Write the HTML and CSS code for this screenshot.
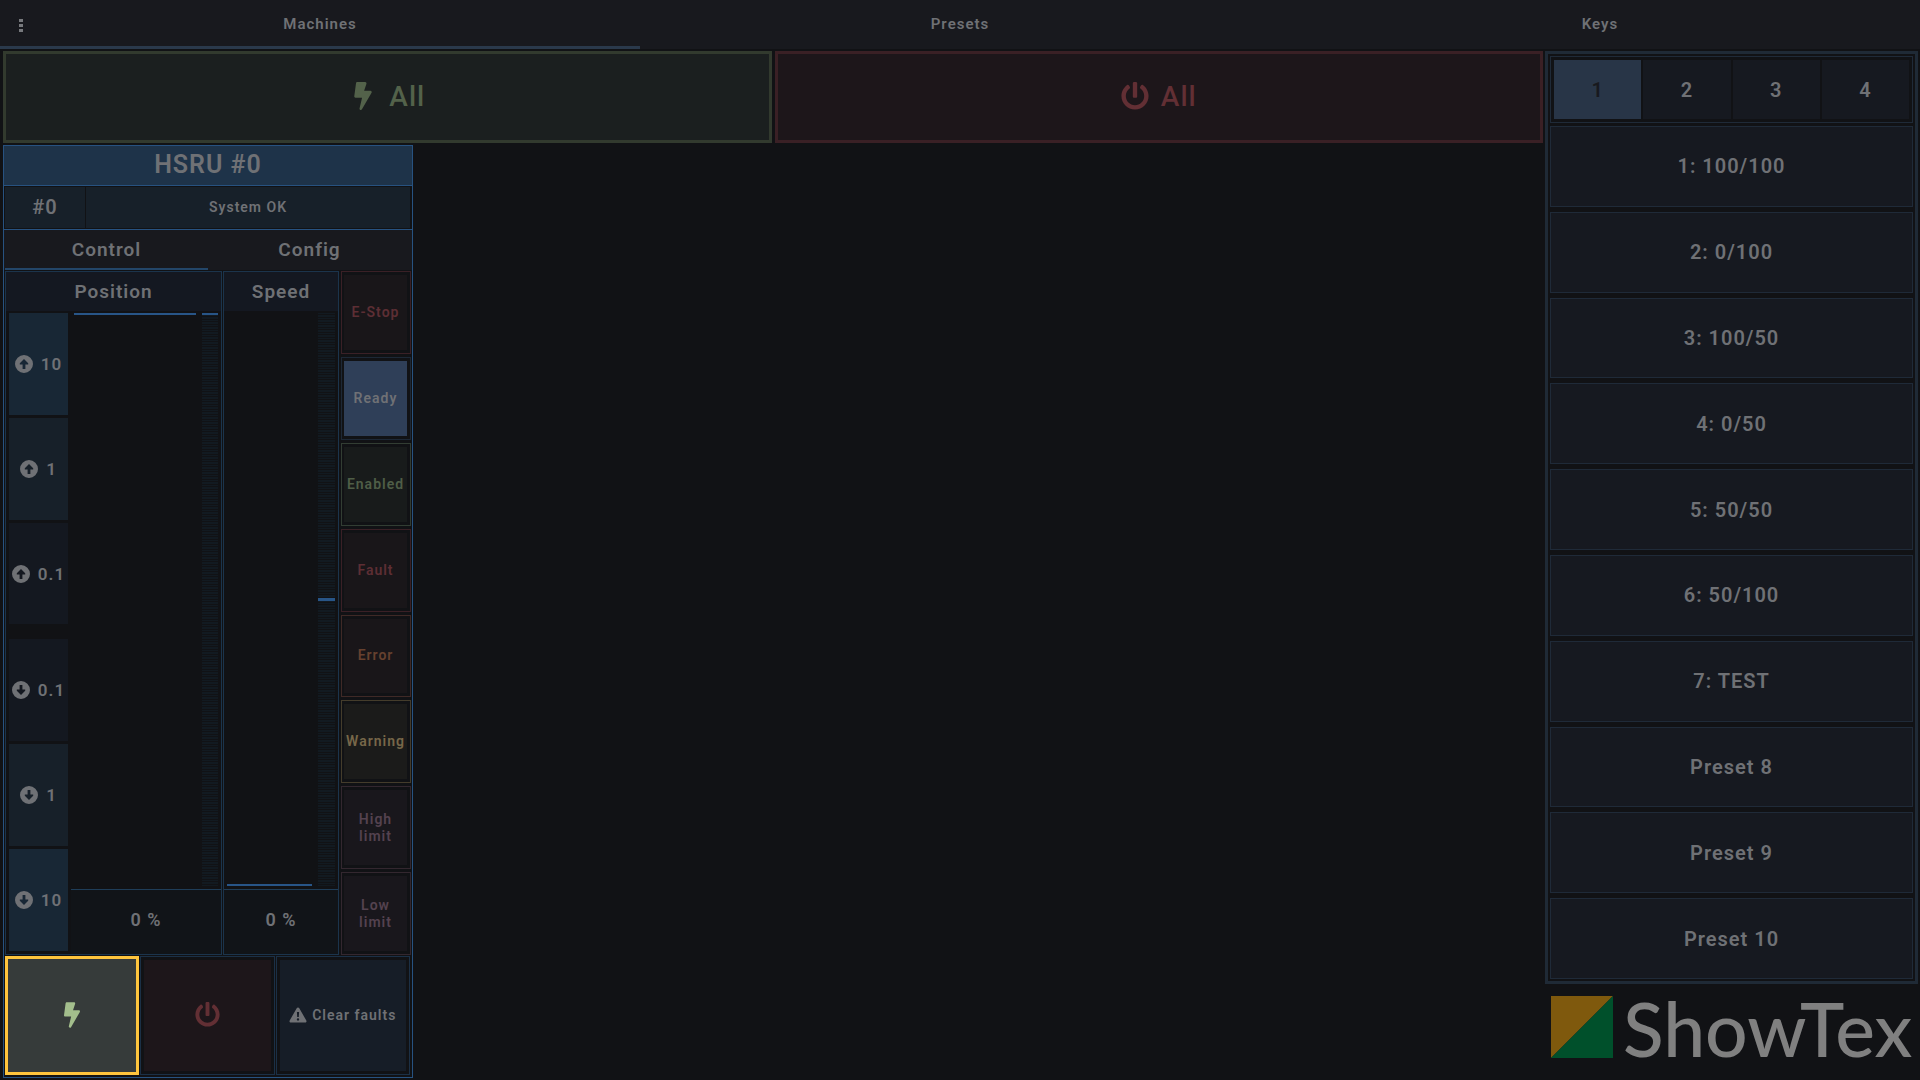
FILE: index.html
```
<!DOCTYPE html>
<html lang="en">
<head>
  <meta charset="UTF-8" />
  <meta name="viewport" content="width=device-width, initial-scale=1.0"/>
  <title>ShowTex Control</title>
  <link rel="stylesheet" href="styles.css">
</head>
<body>
  <!-- shared icons -->
  <svg class="sprite" aria-hidden="true">
    <symbol id="bolt" viewBox="0 0 320 512">
      <path d="M296 160H180.600l42.600-129.800C227.200 15 215.700 0 200 0H56C44 0 33.800 8.900 32.200 20.800l-32 240C-1.700 275.200 9.500 288 24 288h118.700L96.600 482.500c-3.600 15.200 8 29.500 23.300 29.500 8.400 0 16.400-4.400 20.800-12l176-304c9.300-15.900-2.200-36-20.700-36z"/>
    </symbol>
    <symbol id="power" viewBox="0 0 512 512">
      <path d="M400 54.100c63 45 104 118.600 104 201.900 0 136.800-110.800 247.700-247.500 248C120 504.300 8.200 393 8 256.400 7.900 173.100 48.900 99.300 111.800 54.200c11.700-8.300 28-4.800 35 7.700L162.600 90c5.900 10.500 3.100 23.800-6.600 31-41.500 30.800-68 79.600-68 134.900-.1 92.300 74.500 168.100 168 168.100 91.600 0 168.600-74.200 168-169.100-.3-51.800-24.700-101.800-68.100-134-9.700-7.200-12.400-20.500-6.500-30.900l15.800-28.100c7-12.400 23.200-16.100 34.800-7.800zM296 264V24c0-13.300-10.700-24-24-24h-32c-13.300 0-24 10.700-24 24v240c0 13.300 10.700 24 24 24h32c13.300 0 24-10.700 24-24z"/>
    </symbol>
    <symbol id="up" viewBox="0 0 18 18">
      <path fill-rule="evenodd" d="M9 0a9 9 0 1 1 0 18A9 9 0 0 1 9 0zM9 4L4.800 8.200V9.600H7.600V14H10.400V9.600H13.200V8.200z"/>
    </symbol>
    <symbol id="down" viewBox="0 0 18 18">
      <path fill-rule="evenodd" d="M9 0a9 9 0 1 1 0 18A9 9 0 0 1 9 0zM9 14L4.800 9.800V8.400H7.600V4H10.400V8.400H13.200V9.800z"/>
    </symbol>
    <symbol id="warn" viewBox="0 0 18 16">
      <path fill-rule="evenodd" d="M9 0.500c.6 0 1 .3 1.300.8l7 12.200c.6 1-.1 2-1.200 2H1.900c-1.100 0-1.800-1-1.200-2l7-12.200c.3-.5.700-.8 1.300-.8zM7.900 5l.3 5h1.600l.3-5zM9 11.200a1.200 1.200 0 1 0 0 2.400a1.200 1.200 0 0 0 0-2.400z"/>
    </symbol>
  </svg>

  <header>
    <button class="menu-button" aria-label="Menu"><span></span><span></span><span></span></button>
    <nav class="main-tabs">
      <button class="tab-button active">Machines</button>
      <button class="tab-button">Presets</button>
      <button class="tab-button">Keys</button>
    </nav>
  </header>

  <main>
    <section class="machines">
      <div class="all-row">
        <button class="all-button enable"><svg><use href="#bolt"/></svg>All</button>
        <button class="all-button disable"><svg><use href="#power"/></svg>All</button>
      </div>

      <article class="machine">
        <h2>HSRU #0</h2>
        <div class="machine-info">
          <div class="machine-id">#0</div>
          <div class="machine-state">System OK</div>
        </div>
        <div class="machine-tabs">
          <button class="active">Control</button>
          <button>Config</button>
        </div>

        <div class="control">
          <section class="axis position">
            <h3>Position</h3>
            <div class="axis-body">
              <div class="jog">
                <button class="step-10"><svg><use href="#up"/></svg>10</button>
                <button class="step-1"><svg><use href="#up"/></svg>1</button>
                <button class="step-01"><svg><use href="#up"/></svg>0.1</button>
                <button class="step-01 first-down"><svg><use href="#down"/></svg>0.1</button>
                <button class="step-1"><svg><use href="#down"/></svg>1</button>
                <button class="step-10"><svg><use href="#down"/></svg>10</button>
              </div>
              <div class="gauge">
                <div class="tracks">
                  <div class="slider at-top"></div>
                  <div class="meter at-top"></div>
                </div>
                <div class="readout">0 %</div>
              </div>
            </div>
          </section>

          <section class="axis speed">
            <h3>Speed</h3>
            <div class="axis-body">
              <div class="gauge">
                <div class="tracks">
                  <div class="slider at-bottom"></div>
                  <div class="meter at-middle"></div>
                </div>
                <div class="readout">0 %</div>
              </div>
            </div>
          </section>

          <div class="status">
            <div class="lamp red"><span>E-Stop</span></div>
            <div class="lamp ready"><span>Ready</span></div>
            <div class="lamp green"><span>Enabled</span></div>
            <div class="lamp red"><span>Fault</span></div>
            <div class="lamp orange"><span>Error</span></div>
            <div class="lamp yellow"><span>Warning</span></div>
            <div class="lamp purple"><span>High limit</span></div>
            <div class="lamp purple"><span>Low limit</span></div>
          </div>
        </div>

        <div class="actions">
          <button class="action action-enable" aria-label="Enable"><span><svg class="icon-bolt"><use href="#bolt"/></svg></span></button>
          <button class="action action-disable" aria-label="Disable"><span><svg class="icon-power"><use href="#power"/></svg></span></button>
          <button class="action action-clear"><span><svg class="icon-warn"><use href="#warn"/></svg>Clear faults</span></button>
        </div>
      </article>
    </section>

    <aside>
      <div class="presets">
        <div class="pages">
          <button class="active">1</button>
          <button>2</button>
          <button>3</button>
          <button>4</button>
        </div>
        <button class="preset">1: 100/100</button>
        <button class="preset">2: 0/100</button>
        <button class="preset">3: 100/50</button>
        <button class="preset">4: 0/50</button>
        <button class="preset">5: 50/50</button>
        <button class="preset">6: 50/100</button>
        <button class="preset">7: TEST</button>
        <button class="preset">Preset 8</button>
        <button class="preset">Preset 9</button>
        <button class="preset">Preset 10</button>
      </div>
      <div class="logo">
        <svg class="logo-mark" viewBox="0 0 62 62" aria-hidden="true">
          <path fill="#7f590d" d="M0 0H62L0 62z"/>
          <path fill="#00502b" d="M62 0V62H0z"/>
        </svg>
        <span class="logo-text">ShowTex</span>
      </div>
    </aside>
  </main>
</body>
</html>
```
FILE: styles.css
```
* {
  box-sizing: border-box;
}
body {
  margin: 0;
  height: 100vh;
  display: flex;
  flex-direction: column;
  background: #111215;
  color: #6f7175;
  font-family: Roboto, sans-serif;
  font-weight: 600;
  letter-spacing: 1px;
}
button {
  margin: 0;
  padding: 0;
  border: none;
  background: none;
  color: inherit;
  font: inherit;
  letter-spacing: inherit;
  cursor: pointer;
}
h2, h3 {
  margin: 0;
  font-weight: 600;
}
svg {
  fill: currentColor;
  flex: none;
}
.sprite {
  position: absolute;
  width: 0;
  height: 0;
}

/* top bar */
header {
  position: relative;
  background: #18191e;
}
.menu-button {
  position: absolute;
  left: 8px;
  top: 8px;
  width: 26px;
  height: 34px;
  display: flex;
  flex-direction: column;
  align-items: center;
  justify-content: center;
  gap: 2px;
}
.menu-button span {
  width: 4px;
  height: 3px;
  background: #77797d;
}
.main-tabs {
  display: grid;
  grid-template-columns: repeat(3, 1fr);
}
.tab-button {
  height: 49px;
  padding-top: 2px;
  border-bottom: 3px solid transparent;
  font-size: 15px;
}
.tab-button.active {
  border-bottom-color: #2a394b;
}

main {
  flex: 1;
  min-height: 0;
  display: flex;
  gap: 2px;
  padding: 2px 2px 2px 3px;
}
.machines {
  flex: 1;
  display: flex;
  flex-direction: column;
  gap: 2px;
}
.all-row {
  display: grid;
  grid-template-columns: 1fr 1fr;
  gap: 3px;
}
.all-button {
  height: 92px;
  display: flex;
  align-items: center;
  justify-content: center;
  gap: 12px;
  padding-bottom: 2px;
  font-size: 28px;
  font-weight: 500;
}
.all-button svg {
  width: 28px;
  height: 28px;
}
.enable {
  border: 3px solid #323a2e;
  background: #1b1f1f;
  color: #53624a;
}
.disable {
  border: 3px solid #3a2025;
  background: #1d161a;
  color: #622f34;
}

/* machine card */
.machine {
  width: 410px;
  flex: 1;
  min-height: 0;
  display: flex;
  flex-direction: column;
  border: 1px solid #275280;
}
.machine h2 {
  height: 40px;
  border-bottom: 1px solid #275280;
  background: #1e3349;
  font-size: 25px;
  line-height: 38px;
  text-align: center;
}
.machine-info {
  display: flex;
  gap: 1px;
  padding: 1px 2px 1px 1px;
  border-bottom: 1px solid #275280;
  line-height: 41px;
  text-align: center;
}
.machine-info > div {
  background: #172029;
}
.machine-id {
  width: 80px;
  font-size: 20px;
}
.machine-state {
  flex: 1;
  font-size: 14px;
}
.machine-tabs {
  display: grid;
  grid-template-columns: 1fr 1fr;
  padding: 0 1px;
  background: #18191e;
}
.machine-tabs button {
  height: 40px;
  border-bottom: 2px solid transparent;
  font-size: 19px;
}
.machine-tabs .active {
  border-bottom-color: #234669;
}

.control {
  flex: 1;
  min-height: 0;
  display: flex;
  gap: 1px;
  padding: 1px;
}
.axis {
  display: flex;
  flex-direction: column;
  border: 1px solid #1b344c;
}
.position {
  width: 217px;
}
.speed {
  width: 116px;
}
.axis h3 {
  height: 39px;
  background: #141821;
  font-size: 19px;
  line-height: 39px;
  text-align: center;
}
.axis-body {
  flex: 1;
  min-height: 0;
  display: flex;
}
.jog {
  width: 65px;
  display: flex;
  flex-direction: column;
  gap: 3px;
  padding: 2px 3px 3px;
}
.jog button {
  flex: 1;
  display: flex;
  align-items: center;
  justify-content: center;
  gap: 8px;
  font-size: 17px;
}
.jog svg {
  width: 18px;
  height: 18px;
}
.jog .first-down {
  margin-top: 12px;
}
.step-10 {
  background: #182735;
}
.step-1 {
  background: #172029;
}
.step-01 {
  background: #141820;
}
.gauge {
  flex: 1;
  display: flex;
  flex-direction: column;
}
.tracks {
  flex: 1;
  display: flex;
  gap: 6px;
  padding: 2px 3px 3px;
}
.slider {
  flex: 1;
}
.at-top {
  border-top: 2px solid #285587;
}
.at-bottom {
  border-bottom: 2px solid #285587;
}
.meter {
  width: 16px;
  display: flex;
  flex-direction: column;
  justify-content: center;
  background-image: repeating-linear-gradient(#121a21 0 1px, transparent 1px 2px, #121a21 2px 4px, transparent 4px 5px);
}
.speed .meter {
  width: 17px;
}
.at-middle::before {
  content: "";
  height: 3px;
  background: #285587;
}
.readout {
  height: 65px;
  border-top: 1px solid #1f3d58;
  background: #111418;
  font-size: 18px;
  line-height: 59px;
  text-align: center;
}

/* status lamps */
.status {
  flex: 1;
  display: flex;
  flex-direction: column;
  gap: 3px;
  margin-left: 1px;
}
.lamp {
  flex: 1;
  display: flex;
  padding: 3px 3px 3px 2px;
  border: 1px solid;
  font-size: 14px;
  line-height: 17px;
}
.lamp span {
  flex: 1;
  min-width: 0;
  display: flex;
  align-items: center;
  justify-content: center;
  text-align: center;
}
.red {
  border-color: #3a2026;
  color: #5d2e34;
}
.red span, .orange span {
  background: #191619;
}
.ready {
  border-color: #1d2836;
}
.ready span {
  background: #2f3f58;
}
.green {
  border-color: #323d33;
  color: #4f5e47;
}
.green span {
  background: #181b1b;
}
.orange {
  border-color: #3f2926;
  color: #66412f;
}
.yellow {
  border-color: #443c2b;
  color: #776749;
}
.yellow span {
  background: #1b1b1a;
}
.purple {
  border-color: #33272f;
  color: #54424f;
}
.purple span {
  background: #19171c;
}

/* machine actions */
.actions {
  height: 121px;
  display: grid;
  grid-template-columns: repeat(3, 1fr);
  gap: 1px;
  padding: 0 2px 2px 1px;
}
.action {
  display: flex;
  padding: 3px;
  border: 1px solid #1b3046;
  font-size: 14px;
}
.action span {
  flex: 1;
  display: flex;
  align-items: center;
  justify-content: center;
  gap: 5px;
  padding-bottom: 2px;
}
.action .icon-bolt {
  width: 16px;
  height: 26px;
}
.action .icon-power {
  width: 25px;
  height: 25px;
}
.action .icon-warn {
  width: 18px;
  height: 16px;
}
.action-enable {
  padding: 0;
  border: 3px solid #ffc53d;
  background: #363b3a;
  color: #a3be8c;
}
.action-disable {
  color: #622f34;
}
.action-disable span {
  background: #1d161a;
}
.action-clear span {
  background: #161d27;
}

/* presets */
aside {
  width: 373px;
  display: flex;
  flex-direction: column;
}
.presets {
  flex: 1;
  display: flex;
  flex-direction: column;
  gap: 5px;
  padding: 2px;
  border: 3px solid #1f2a36;
  font-size: 20px;
}
.pages {
  height: 67px;
  display: grid;
  grid-template-columns: repeat(4, 1fr);
  gap: 2px;
  margin-bottom: -2px;
  padding: 3px;
  border: 1px solid #1f2a38;
}
.pages button {
  background: #161920;
}
.pages .active {
  background: #283547;
  color: #18191e;
}
.preset {
  flex: 1;
  border: 1px solid #1f2a38;
  background: #161920;
}

.logo {
  height: 94px;
  display: flex;
  gap: 10px;
  padding: 12px 0 0 6px;
}
.logo-mark {
  width: 62px;
  height: 62px;
}
.logo-text {
  color: #808080;
  font-family: Lato, sans-serif;
  font-size: 75px;
  font-weight: 500;
  letter-spacing: normal;
  line-height: 64px;
}
```
